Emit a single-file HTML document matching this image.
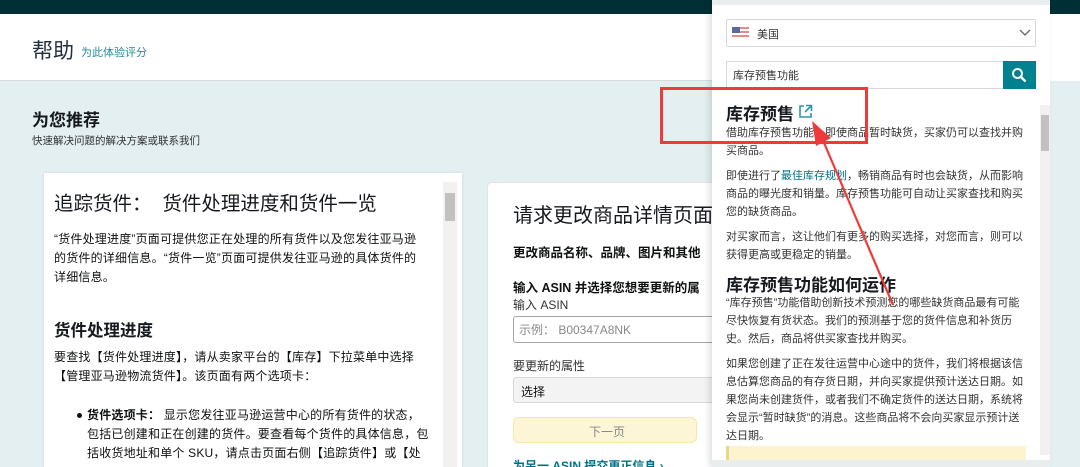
<!DOCTYPE html>
<html style="width:1080px;height:467px;overflow:hidden"><head><meta charset="utf-8"><style>
*{margin:0;padding:0;box-sizing:border-box}
body{width:1080px;height:467px;overflow:hidden;position:relative;background:#e3eff1;font-family:"Liberation Sans","Noto Sans CJK SC",sans-serif;color:#0f1111}
.a{position:absolute;white-space:nowrap}
.t{font-size:12px;letter-spacing:.2px;line-height:19px;color:#0f1111}
.p{font-size:11px;line-height:18px;color:#333}
</style></head><body>
<div class="a" style="left:0;top:0;width:1080px;height:14px;background:#002f36"></div>
<div class="a" style="left:0;top:14px;width:1080px;height:67px;background:#fff;border-bottom:1px solid #d5dbdb"></div>
<div class="a" style="left:32px;top:35px;font-size:21px;color:#232f3e">帮助</div>
<div class="a" style="left:81px;top:44px;font-size:11px;color:#2a8a9a">为此体验评分</div>
<div class="a" style="left:32px;top:106px;font-size:17px;font-weight:bold;color:#16191f">为您推荐</div>
<div class="a" style="left:32px;top:133px;font-size:10.5px;color:#333">快速解决问题的解决方案或联系我们</div>

<div class="a" style="left:44px;top:173px;width:418px;height:294px;background:#fff;box-shadow:0 0 3px rgba(0,0,0,.1)"></div>
<div class="a" style="left:443px;top:182px;width:14px;height:285px;background:#f1f1f1"></div>
<div class="a" style="left:445px;top:193px;width:10px;height:28px;background:#c1c1c1"></div>
<div class="a" style="left:54px;top:187px;font-size:19.5px;color:#16191f">追踪货件：&nbsp;&nbsp;货件处理进度和货件一览</div>
<div class="a t" style="left:54px;top:230px">“货件处理进度”页面可提供您正在处理的所有货件以及您发往亚马逊<br>的货件的详细信息。“货件一览”页面可提供发往亚马逊的具体货件的<br>详细信息。</div>
<div class="a" style="left:54px;top:317px;font-size:16.5px;font-weight:bold;color:#16191f">货件处理进度</div>
<div class="a t" style="left:54px;top:348px">要查找【货件处理进度】，请从卖家平台的【库存】下拉菜单中选择<br>【管理亚马逊物流货件】。该页面有两个选项卡：</div>
<div class="a" style="left:77px;top:413px;width:5px;height:5px;border-radius:50%;background:#111"></div>
<div class="a t" style="left:87px;top:406px"><b>货件选项卡：</b> 显示您发往亚马逊运营中心的所有货件的状态，<br>包括已创建和正在创建的货件。要查看每个货件的具体信息，包<br>括收货地址和单个 SKU，请点击页面右侧【追踪货件】或【处</div>

<div class="a" style="left:487px;top:182px;width:240px;height:290px;background:#fff;border:1px solid #e0e4e4;border-radius:5px"></div>
<div class="a" style="left:513px;top:199px;font-size:20px;color:#16191f">请求更改商品详情页面</div>
<div class="a" style="left:513px;top:242px;font-size:12.5px;font-weight:bold">更改商品名称、品牌、图片和其他</div>
<div class="a" style="left:513px;top:277px;font-size:12.5px;font-weight:bold">输入 ASIN 并选择您想要更新的属</div>
<div class="a" style="left:513px;top:296px;font-size:12px;color:#333">输入 ASIN</div>
<div class="a" style="left:513px;top:316px;width:220px;height:27px;border:1px solid #a6a6a6;border-radius:3px;background:#fff"></div>
<div class="a" style="left:519px;top:321px;font-size:12px;color:#888">示例： B00347A8NK</div>
<div class="a" style="left:513px;top:357px;font-size:12px;color:#333">要更新的属性</div>
<div class="a" style="left:513px;top:377px;width:220px;height:26px;border:1px solid #d5d9d9;border-radius:3px;background:#f3f3f3"></div>
<div class="a" style="left:521px;top:383px;font-size:12px">选择</div>
<div class="a" style="left:513px;top:417px;width:184px;height:26px;border:1px solid #f5e7a8;border-radius:6px;background:#fdf6d6"></div>
<div class="a" style="left:589px;top:423px;font-size:12px;color:#888">下一页</div>
<div class="a" style="left:513px;top:457px;font-size:12px;font-weight:bold;color:#007185">为另一 ASIN 提交更正信息 ›</div>

<div class="a" style="left:1050px;top:14px;width:30px;height:67px;background:#fff"></div>
<div class="a" style="left:712px;top:0;width:338px;height:467px;background:#e9eded;box-shadow:-3px 0 6px rgba(0,0,0,.12)"></div>
<div class="a" style="left:712px;top:5px;width:338px;height:455px;background:#fff"></div>
<div class="a" style="left:726px;top:19px;width:310px;height:28px;border:1px solid #d5d9d9;border-radius:2px"></div>
<svg class="a" style="left:732px;top:27px" width="17" height="12"><rect width="17" height="12" fill="#fff"/><g fill="#e58b8b"><rect y="0" width="17" height="2"/><rect y="4" width="17" height="2"/><rect y="8" width="17" height="2"/></g><rect width="8" height="6" fill="#5b6a9a"/></svg>
<div class="a" style="left:757px;top:26px;font-size:11px;color:#333">美国</div>
<svg class="a" style="left:1019px;top:29px" width="12" height="8"><path d="M1 1l5 5 5-5" fill="none" stroke="#666" stroke-width="1.3"/></svg>
<div class="a" style="left:726px;top:61px;width:278px;height:28px;border:1px solid #d5d9d9"></div>
<div class="a" style="left:733px;top:67px;font-size:11px;color:#333">库存预售功能</div>
<div class="a" style="left:1003px;top:61px;width:33px;height:28px;background:#00818f"></div>
<svg class="a" style="left:1011px;top:67px" width="16" height="16"><circle cx="6.5" cy="6.5" r="4.5" fill="none" stroke="#fff" stroke-width="2"/><path d="M10 10l4.5 4.5" stroke="#fff" stroke-width="2.4"/></svg>
<div class="a" style="left:1040px;top:105px;width:10px;height:350px;background:#f1f1f1"></div>
<div class="a" style="left:1041px;top:115px;width:8px;height:36px;background:#c1c1c1"></div>
<div class="a" style="left:726px;top:100px;font-size:17px;font-weight:bold;color:#16191f">库存预售</div>
<svg class="a" style="left:798px;top:104px" width="15" height="15"><path d="M6 2H2v11h11V9" fill="none" stroke="#2a9aaa" stroke-width="1.6"/><path d="M8 1.5h5.5V7M13.5 1.5L7 8" fill="none" stroke="#2a9aaa" stroke-width="1.6"/></svg>
<div class="a p" style="left:726px;top:124px">借助库存预售功能，即使商品暂时缺货，买家仍可以查找并购<br>买商品。</div>
<div class="a p" style="left:726px;top:167px">即使进行了<span style="color:#007185">最佳库存规划</span>，畅销商品有时也会缺货，从而影响<br>商品的曝光度和销量。库存预售功能可自动让买家查找和购买<br>您的缺货商品。</div>
<div class="a p" style="left:726px;top:228px">对买家而言，这让他们有更多的购买选择，对您而言，则可以<br>获得更高或更稳定的销量。</div>
<div class="a" style="left:726px;top:271px;font-size:17px;font-weight:bold;color:#16191f">库存预售功能如何运作</div>
<div class="a p" style="left:726px;top:294px">“库存预售”功能借助创新技术预测您的哪些缺货商品最有可能<br>尽快恢复有货状态。我们的预测基于您的货件信息和补货历<br>史。然后，商品将供买家查找并购买。</div>
<div class="a p" style="left:726px;top:355px">如果您创建了正在发往运营中心途中的货件，我们将根据该信<br>息估算您商品的有存货日期，并向买家提供预计送达日期。如<br>果您尚未创建货件，或者我们不确定货件的送达日期，系统将<br>会显示“暂时缺货”的消息。这些商品将不会向买家显示预计送<br>达日期。</div>
<div class="a" style="left:726px;top:446px;width:300px;height:14px;background:#fdf3cf;border-left:3px solid #e8d68a"></div>

<div class="a" style="left:660px;top:87px;width:208px;height:57px;border:3px solid #f03a3a"></div>
<svg class="a" style="left:0;top:0" width="1080" height="467"><path d="M822 138L893 305" stroke="#f03a3a" stroke-width="2.2"/><path d="M812 121L816 146L831 138Z" fill="#f03a3a"/></svg>
</body></html>
